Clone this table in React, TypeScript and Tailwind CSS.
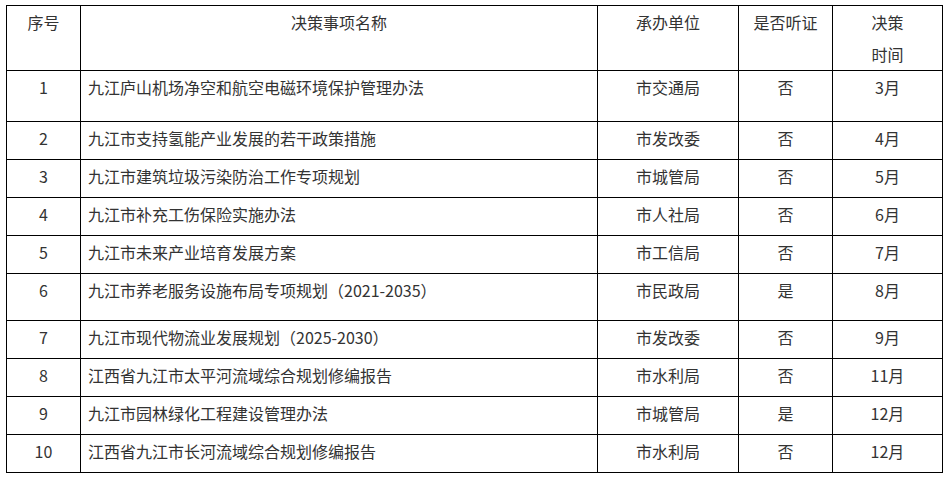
const rows = [
  { no: '1', name: '九江庐山机场净空和航空电磁环境保护管理办法', dept: '市交通局', hearing: '否', month: '3月', h: 'h-[51px]' },
  { no: '2', name: '九江市支持氢能产业发展的若干政策措施', dept: '市发改委', hearing: '否', month: '4月', h: 'h-[38px]' },
  { no: '3', name: '九江市建筑垃圾污染防治工作专项规划', dept: '市城管局', hearing: '否', month: '5月', h: 'h-[38px]' },
  { no: '4', name: '九江市补充工伤保险实施办法', dept: '市人社局', hearing: '否', month: '6月', h: 'h-[38px]' },
  { no: '5', name: '九江市未来产业培育发展方案', dept: '市工信局', hearing: '否', month: '7月', h: 'h-[38px]' },
  { no: '6', name: '九江市养老服务设施布局专项规划（2021-2035）', dept: '市民政局', hearing: '是', month: '8月', h: 'h-[47px]' },
  { no: '7', name: '九江市现代物流业发展规划（2025-2030）', dept: '市发改委', hearing: '否', month: '9月', h: 'h-[38px]' },
  { no: '8', name: '江西省九江市太平河流域综合规划修编报告', dept: '市水利局', hearing: '否', month: '11月', h: 'h-[38px]' },
  { no: '9', name: '九江市园林绿化工程建设管理办法', dept: '市城管局', hearing: '是', month: '12月', h: 'h-[38px]' },
  { no: '10', name: '江西省九江市长河流域综合规划修编报告', dept: '市水利局', hearing: '否', month: '12月', h: 'h-[38px]' },
];

const cell = 'border border-black align-top p-0 leading-[32px]';

export default function App() {
  return (
    <div className="min-h-[478px] bg-white pl-[6px] pt-[5px] text-[16px] text-[#333] [font-family:'Microsoft_YaHei','Noto_Sans_CJK_SC',sans-serif]">
      <table className="table-fixed border-collapse w-[936px]">
        <colgroup>
          <col className="w-[74px]" />
          <col className="w-[517px]" />
          <col className="w-[141px]" />
          <col className="w-[94px]" />
          <col className="w-[110px]" />
        </colgroup>
        <thead>
          <tr className="h-[65px]">
            <th className={`${cell} font-normal text-center`}>序号</th>
            <th className={`${cell} font-normal text-center`}>决策事项名称</th>
            <th className={`${cell} font-normal text-center`}>承办单位</th>
            <th className={`${cell} font-normal text-center`}>是否听证</th>
            <th className={`${cell} font-normal text-center`}>
              决策
              <br />
              时间
            </th>
          </tr>
        </thead>
        <tbody>
          {rows.map((r) => (
            <tr key={r.no} className={r.h}>
              <td className={`${cell} text-center`}>{r.no}</td>
              <td className={`${cell} px-[7px] text-left`}>{r.name}</td>
              <td className={`${cell} text-center`}>{r.dept}</td>
              <td className={`${cell} text-center`}>{r.hearing}</td>
              <td className={`${cell} text-center`}>{r.month}</td>
            </tr>
          ))}
        </tbody>
      </table>
    </div>
  );
}
